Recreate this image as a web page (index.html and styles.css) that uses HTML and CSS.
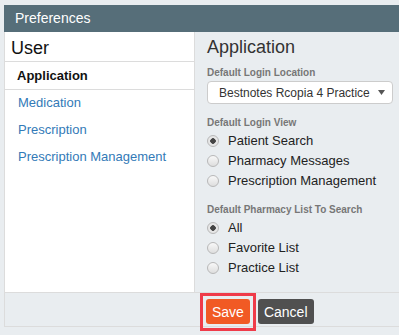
FILE: index.html
```html
<!DOCTYPE html>
<html lang="en">
<head>
  <meta charset="UTF-8">
  <title>Preferences</title>
  <link rel="stylesheet" href="styles.css">
</head>
<body>

  <div class="prefs">
    <div class="prefs-header">Preferences</div>

    <div class="prefs-body">
      <!-- Left menu -->
      <div class="side">
        <div class="side-title">User</div>
        <div class="side-item active">Application</div>
        <a class="side-item" href="#">Medication</a>
        <a class="side-item" href="#">Prescription</a>
        <a class="side-item" href="#">Prescription Management</a>
      </div>

      <!-- Application settings -->
      <div class="main">
        <h2>Application</h2>

        <div class="field-label">Default Login Location</div>
        <div class="select">
          <span>Bestnotes Rcopia 4 Practice</span>
          <svg width="7" height="5" viewBox="0 0 7 5"><path d="M0 0 L7 0 L3.5 5 Z" fill="#555"/></svg>
        </div>

        <div class="field-label gap">Default Login View</div>
        <label class="radio"><input type="radio" name="view" checked> Patient Search</label>
        <label class="radio"><input type="radio" name="view"> Pharmacy Messages</label>
        <label class="radio"><input type="radio" name="view"> Prescription Management</label>

        <div class="field-label gap">Default Pharmacy List To Search</div>
        <label class="radio"><input type="radio" name="list" checked> All</label>
        <label class="radio"><input type="radio" name="list"> Favorite List</label>
        <label class="radio"><input type="radio" name="list"> Practice List</label>
      </div>
    </div>

    <div class="prefs-footer">
      <button class="btn btn-save">Save</button>
      <button class="btn btn-cancel">Cancel</button>
    </div>
  </div>

</body>
</html>
```

FILE: styles.css
```css
body, html {
  margin: 0;
  height: 100%;
  overflow: hidden;
  background-color: #e9edf0;
  font-family: "Liberation Sans", Arial, sans-serif;
}

.prefs {
  margin: 5px 0 0 4px;
}

.prefs-header {
  height: 27px;
  line-height: 27px;
  padding-left: 11px;
  background-color: #566e79;
  color: #fff;
  font-size: 14px;
}

.prefs-body {
  display: flex;
}

/* Left menu */
.side {
  width: 191px;
  box-sizing: border-box;
  background-color: #fff;
  border-left: 1px solid #dcdcdc;
  border-right: 1px solid #dcdcdc;
}

.side-title {
  font-size: 18px;
  line-height: 22px;
  padding: 5px 6px 2px;
  color: #111;
  border-bottom: 1px solid #dcdcdc;
}

.side-item {
  display: block;
  font-size: 13px;
  line-height: 17px;
  padding: 4px 13px 6px;
  color: #337ab7;
  text-decoration: none;
}

.side-item.active {
  padding: 5px 12px;
  font-weight: bold;
  color: #111;
  border-bottom: 1px solid #dcdcdc;
}

/* Right column */
.main {
  flex: 1;
  padding: 4px 0 14px 12px;
}

.main h2 {
  margin: 0 0 9px;
  font-size: 18px;
  line-height: 22px;
  font-weight: normal;
  color: #333;
}

.field-label {
  font-size: 10px;
  line-height: 12px;
  font-weight: bold;
  color: #777;
  margin-bottom: 2px;
}

.field-label.gap {
  margin-top: 13px;
}

.select {
  width: 186px;
  height: 23px;
  box-sizing: border-box;
  display: flex;
  align-items: center;
  justify-content: space-between;
  padding: 0 7px 0 11px;
  background-color: #fff;
  border: 1px solid #ccc;
  border-radius: 4px;
  font-size: 12px;
  color: #333;
}

.radio {
  display: flex;
  align-items: center;
  gap: 9px;
  font-size: 13px;
  line-height: 20px;
  color: #222;
}

.radio input {
  appearance: none;
  -webkit-appearance: none;
  margin: 0;
  width: 12px;
  height: 12px;
  border: 1px solid #b8b8b8;
  border-radius: 50%;
  background: linear-gradient(#f8f8f8, #dedede);
}

.radio input:checked {
  background: radial-gradient(circle, #444 0, #444 2.5px, #e6e6e6 3px, #e6e6e6 100%);
}

/* Footer */
.prefs-footer {
  border-top: 1px solid #dcdcdc;
  border-bottom: 1px solid #dcdcdc;
  border-left: 1px solid #dcdcdc;
  padding: 6px 0 2px 201px;
  display: flex;
  gap: 8px;
}

.btn {
  height: 25px;
  padding: 0 6px;
  border: none;
  border-radius: 3px;
  color: #fff;
  font-family: "Liberation Sans", Arial, sans-serif;
  font-size: 14px;
}

.btn-save {
  position: relative;
  background-color: #f15a24;
}

/* highlight box round the Save button */
.btn-save::after {
  content: "";
  position: absolute;
  left: -6px;
  right: -6px;
  top: -6px;
  bottom: -7px;
  border: 3px solid #ef3b49;
}

.btn-cancel {
  background-color: #505050;
}
```
